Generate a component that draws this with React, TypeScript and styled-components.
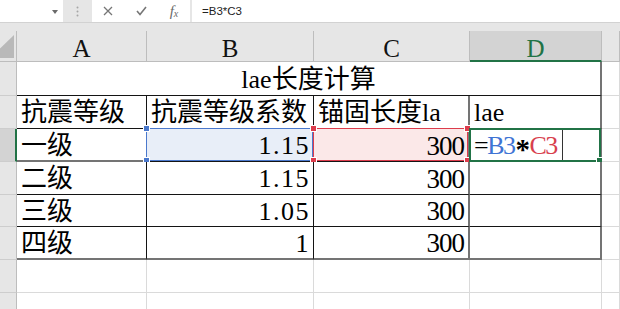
import React from 'react'
import styled, { createGlobalStyle } from 'styled-components'

const GlobalStyle = createGlobalStyle`
  html, body {
    margin: 0;
    padding: 0;
    background: #fff;
    overflow: hidden;
  }
  body {
    font-family: "Liberation Serif", "Noto Sans CJK SC", serif;
  }
`

const GREEN = '#217346'
const GRID = '#dadada'
const INK = '1px solid #141414'
const EDGE = '2px solid #747474'

type Grade = { label: string; coef: string; len: string; active?: boolean }

const grades: Grade[] = [
  { label: '一级', coef: '1.15', len: '300', active: true },
  { label: '二级', coef: '1.15', len: '300' },
  { label: '三级', coef: '1.05', len: '300' },
  { label: '四级', coef: '1', len: '300' },
]

const App = () => {
  return (
    <Window>
      <GlobalStyle />
      <FormulaBar>
        <NameBox>
          <DropArrow />
        </NameBox>
        <Grip>
          <svg width="3" height="11" viewBox="0 0 3 11">
            <circle cx="1.5" cy="1.5" r="1" fill="#a6a6a6" />
            <circle cx="1.5" cy="5.5" r="1" fill="#a6a6a6" />
            <circle cx="1.5" cy="9.5" r="1" fill="#a6a6a6" />
          </svg>
        </Grip>
        <FnBox>
          <IconSlot>
            <svg width="10" height="10" viewBox="0 0 10 10">
              <path d="M1 1 L9 9 M9 1 L1 9" stroke="#767676" strokeWidth="1.3" fill="none" />
            </svg>
          </IconSlot>
          <IconSlot>
            <svg width="11" height="10" viewBox="0 0 11 10">
              <path d="M1 5 L4 8.5 L10 1" stroke="#767676" strokeWidth="1.6" fill="none" />
            </svg>
          </IconSlot>
          <IconSlot>
            <FxText>
              f<sub>x</sub>
            </FxText>
          </IconSlot>
        </FnBox>
        <FormulaInput>=B3*C3</FormulaInput>
      </FormulaBar>

      <Spacer />

      <Sheet>
        {/* column headers */}
        <Corner>
          <svg width="16" height="30" viewBox="0 0 16 30">
            <polygon points="14,4 14,27 -10,27" fill="#b9b9b9" />
          </svg>
        </Corner>
        <ColHead>A</ColHead>
        <ColHead>B</ColHead>
        <ColHead>C</ColHead>
        <ColHead $active>D</ColHead>
        <ColHead />

        {/* title row */}
        <RowHead />
        <Cell $span={4} $align="center" $right={EDGE} $bottom={INK}>
          lae长度计算
        </Cell>
        <Cell />

        {/* field names */}
        <RowHead />
        <Cell $right={INK} $bottom={INK}>抗震等级</Cell>
        <Cell $right={INK} $bottom={INK}>抗震等级系数</Cell>
        <Cell $right={EDGE} $bottom={INK}>锚固长度la</Cell>
        <Cell $right={EDGE} $bottom={INK}>lae</Cell>
        <Cell />

        {grades.map((g, i) => {
          const last = i === grades.length - 1
          const bottom = last || g.active ? EDGE : INK
          return (
            <React.Fragment key={g.label}>
              <RowHead $active={g.active} />
              <Cell $right={INK} $bottom={bottom}>{g.label}</Cell>
              <Cell $align="right" $right={INK} $bottom={last ? EDGE : INK} $fill={g.active ? '#e8eef8' : undefined}>
                <Coef>{g.coef}</Coef>
                {g.active && (
                  <Frame $color="#4a78cc">
                    <Handle $color="#4a78cc" $v="top" $h="left" />
                    <Handle $color="#4a78cc" $v="bottom" $h="left" />
                  </Frame>
                )}
              </Cell>
              <Cell $align="right" $right={EDGE} $bottom={last ? EDGE : INK} $fill={g.active ? '#fbe8e8' : undefined}>
                <Len>{g.len}</Len>
                {g.active && (
                  <Frame $color="#dc3c4c">
                    <Handle $color="#dc3c4c" $v="top" $h="left" />
                    <Handle $color="#dc3c4c" $v="bottom" $h="left" />
                    <Handle $color="#dc3c4c" $v="top" $h="right" />
                    <Handle $color="#dc3c4c" $v="bottom" $h="right" />
                  </Frame>
                )}
              </Cell>
              <Cell $right={EDGE} $bottom={last ? EDGE : INK}>
                {g.active && (
                  <>
                    <Formula>
                      =<Ref $color="#3f74d4">B3</Ref>
                      <Op>*</Op>
                      <Ref $color="#d8404e">C3</Ref>
                    </Formula>
                    <Caret />
                    <Frame $color={GREEN} $thick>
                      <Handle $color={GREEN} $v="bottom" $h="right" />
                    </Frame>
                  </>
                )}
              </Cell>
              <Cell />
            </React.Fragment>
          )
        })}

        {[0, 1, 2].map((r) => (
          <React.Fragment key={r}>
            <RowHead />
            <Cell />
            <Cell />
            <Cell />
            <Cell />
            <Cell />
          </React.Fragment>
        ))}
      </Sheet>
    </Window>
  )
}

export default App

const Window = styled.div`
  width: 620px;
  height: 309px;
  overflow: hidden;
  background: #e6e6e6;
  display: flex;
  flex-direction: column;
`
const FormulaBar = styled.div`
  display: flex;
  flex: none;
  height: 23px;
  box-sizing: border-box;
  border-bottom: 1px solid #d2d2d2;
  background: #e6e6e6;
`
const NameBox = styled.div`
  width: 63px;
  background: #fff;
  display: flex;
  align-items: center;
  justify-content: flex-end;
  padding-right: 5px;
  box-sizing: border-box;
`
const DropArrow = styled.span`
  width: 0;
  height: 0;
  border-left: 3.5px solid transparent;
  border-right: 3.5px solid transparent;
  border-top: 4px solid #6a6a6a;
  margin-top: 1px;
`
const Grip = styled.div`
  width: 29px;
  display: flex;
  align-items: center;
  justify-content: center;
`
const FnBox = styled.div`
  width: 98px;
  background: #fff;
  display: flex;
  align-items: center;
  padding-left: 10px;
  gap: 21px;
  box-sizing: border-box;
`
const IconSlot = styled.div`
  width: 12px;
  height: 12px;
  display: flex;
  align-items: center;
  justify-content: center;
`
const FxText = styled.span`
  font-family: "Liberation Serif", serif;
  font-style: italic;
  font-size: 15px;
  color: #6a6a6a;
  line-height: 1;
  white-space: nowrap;

  sub {
    font-size: 10px;
    vertical-align: -1px;
  }
`
const FormulaInput = styled.div`
  flex: 1;
  margin-left: 2px;
  background: #fff;
  padding-left: 10px;
  display: flex;
  align-items: center;
  font-family: "Liberation Sans", sans-serif;
  font-size: 11.5px;
  color: #222;
`
const Spacer = styled.div`
  height: 8px;
  flex: none;
`
const Sheet = styled.div`
  display: grid;
  grid-template-columns: 17px 130px 167px 156px 132px 18px;
  grid-template-rows: 31px 34px 33px 33px 33px 32px 33px 33px 33px;
  background: #fff;
`
const Corner = styled.div`
  background: #e6e6e6;
  border-right: 1px solid #bdbdbd;
  border-bottom: 1px solid #bdbdbd;
  overflow: hidden;
  display: flex;
  align-items: flex-start;
`
const ColHead = styled.div<{ $active?: boolean }>`
  box-sizing: border-box;
  background: ${({ $active }) => ($active ? '#d3d3d3' : '#e6e6e6')};
  border-right: 1px solid #bdbdbd;
  border-bottom: ${({ $active }) => ($active ? `2px solid ${GREEN}` : '1px solid #bdbdbd')};
  color: ${({ $active }) => ($active ? GREEN : '#111')};
  display: flex;
  align-items: center;
  justify-content: center;
  padding-top: 5px;
  font-size: 25px;
  line-height: 1;
`
const RowHead = styled.div<{ $active?: boolean }>`
  box-sizing: border-box;
  background: ${({ $active }) => ($active ? '#d3d3d3' : '#e6e6e6')};
  border-right: ${({ $active }) => ($active ? `2px solid ${GREEN}` : '1px solid #bdbdbd')};
  border-bottom: 1px solid #cdcdcd;
`
const Cell = styled.div<{
  $align?: 'left' | 'right' | 'center'
  $right?: string
  $bottom?: string
  $fill?: string
  $span?: number
}>`
  position: relative;
  box-sizing: border-box;
  grid-column: span ${({ $span }) => $span ?? 1};
  background: ${({ $fill }) => $fill ?? '#fff'};
  border-right: ${({ $right }) => $right ?? `1px solid ${GRID}`};
  border-bottom: ${({ $bottom }) => $bottom ?? `1px solid ${GRID}`};
  display: flex;
  align-items: center;
  justify-content: ${({ $align }) =>
    $align === 'right' ? 'flex-end' : $align === 'center' ? 'center' : 'flex-start'};
  padding: 2px 4px 0 4px;
  font-size: 26px;
  line-height: 1;
  color: #000;
  white-space: nowrap;
`
const Coef = styled.span`
  letter-spacing: 1.5px;
  margin-right: -1px;
`
const Len = styled.span`
  font-size: 27px;
  letter-spacing: -1px;
`
const Formula = styled.span`
  letter-spacing: -1.5px;
`
const Ref = styled.span<{ $color: string }>`
  color: ${({ $color }) => $color};
`
const Op = styled.span`
  font-size: 29px;
  font-weight: 700;
  line-height: 0;
  vertical-align: -0.16em;
  margin: 0 1px;
`
const Caret = styled.span`
  align-self: stretch;
  width: 1px;
  margin: -2px 0 0 5px;
  background: #333;
`
const Frame = styled.div<{ $color: string; $thick?: boolean }>`
  position: absolute;
  top: -1px;
  left: -1px;
  right: ${({ $thick }) => ($thick ? '-1px' : '0')};
  bottom: ${({ $thick }) => ($thick ? '-1px' : '0')};
  border: ${({ $thick }) => ($thick ? 2 : 1)}px solid ${({ $color }) => $color};
  pointer-events: none;
`
const Handle = styled.span<{ $color: string; $v: 'top' | 'bottom'; $h: 'left' | 'right' }>`
  position: absolute;
  width: 5px;
  height: 5px;
  background: ${({ $color }) => $color};
  border: 1px solid #fff;
  ${({ $v }) => $v}: -4px;
  ${({ $h }) => $h}: -4px;
`
